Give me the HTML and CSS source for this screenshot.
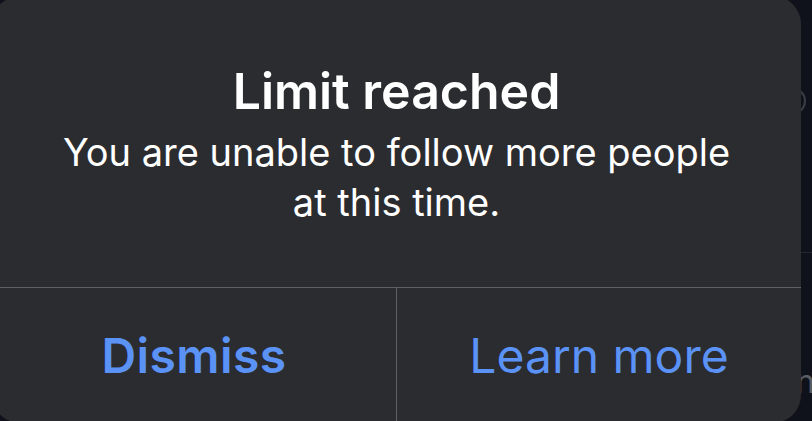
FILE: index.html
```html
<!DOCTYPE html>
<html lang="en">
<head>
  <meta charset="UTF-8" />
  <meta name="viewport" content="width=device-width, initial-scale=1.0"/>
  <title>Limit reached</title>
  <link rel="stylesheet" href="styles.css">
</head>
<body>

  <div class="backdrop">
    <div class="backdrop-ring"></div>
    <div class="backdrop-rule"></div>
    <span class="backdrop-text">n</span>
  </div>

  <div class="alert" role="alertdialog">
    <div class="alert-body">
      <h1 class="alert-title">Limit reached</h1>
      <p class="alert-message">You are unable to follow more people<br>at this time.</p>
    </div>
    <div class="alert-actions">
      <button class="alert-btn primary">Dismiss</button>
      <button class="alert-btn">Learn more</button>
    </div>
  </div>

</body>
</html>
```

FILE: styles.css
```css
:root {
  --sheet: #2b2c2f;
  --backdrop: #0f121a;
  --divider: #5f6063;
  --link: #5b92f6;
  --text: #ffffff;
}

* {
  box-sizing: border-box;
}

html, body {
  margin: 0;
  height: 100%;
}

body {
  font-family: Inter, "Noto Sans", sans-serif;
  background: var(--backdrop);
  color: var(--text);
  overflow: hidden;
  position: relative;
}

/* faint content behind the alert */
.backdrop {
  position: absolute;
  inset: 0;
}

.backdrop-ring {
  position: absolute;
  left: 782px;
  top: 88px;
  width: 24px;
  height: 26px;
  border: 2px solid #3a3d44;
  border-radius: 50%;
}

.backdrop-rule {
  position: absolute;
  left: 0;
  right: 0;
  top: 252px;
  border-top: 1px solid #23262d;
}

.backdrop-text {
  position: absolute;
  left: 796px;
  top: 362px;
  font-size: 32px;
  color: #5a5d64;
}

.alert {
  position: absolute;
  left: -8px;
  top: -4px;
  width: 809px;
  height: 427px;
  background: var(--sheet);
  border-radius: 28px;
  display: flex;
  flex-direction: column;
  overflow: hidden;
}

.alert-body {
  padding-top: 65px;
  text-align: center;
  height: 292px;
  border-bottom: 1px solid var(--divider);
}

.alert-title {
  margin: 0;
  font-size: 50px;
  line-height: 60px;
  font-weight: 600;
}

.alert-message {
  margin: 6px 0 0;
  font-size: 38px;
  line-height: 50px;
  font-weight: 400;
}

.alert-actions {
  flex: 1;
  display: flex;
}

.alert-btn {
  flex: 1;
  border: none;
  background: none;
  font-family: inherit;
  font-size: 48px;
  line-height: 134px;
  font-weight: 400;
  color: var(--link);
  padding: 0;
}

.alert-btn + .alert-btn {
  border-left: 1px solid var(--divider);
}

.alert-btn.primary {
  font-weight: 600;
  letter-spacing: 0.4px;
}
```
